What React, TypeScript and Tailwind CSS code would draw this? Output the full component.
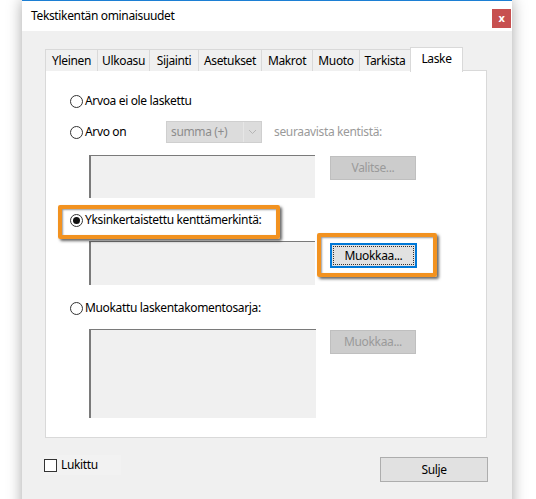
const tabs = [
  { name: "Yleinen", w: "w-[53px]" },
  { name: "Ulkoasu", w: "w-[53px]" },
  { name: "Sijainti", w: "w-[50px]" },
  { name: "Asetukset", w: "w-[64px]" },
  { name: "Makrot", w: "w-[52px]" },
  { name: "Muoto", w: "w-[48px]" },
  { name: "Tarkista", w: "w-[52px]" },
];

const Radio = ({ checked, label }: { checked?: boolean; label: string }) => (
  <div className="flex items-center gap-[2px] h-[20px]">
    <span className="w-[13px] h-[13px] rounded-full border border-[#333] bg-white flex items-center justify-center">
      {checked && <span className="w-[7px] h-[7px] rounded-full bg-[#111]" />}
    </span>
    <span>{label}</span>
  </div>
);

const DisabledButton = ({ label }: { label: string }) => (
  <div className="w-[86px] h-[24px] bg-[#cccccc] border border-[#bfbfbf] text-[#9a9a9a] flex items-center justify-center">
    {label}
  </div>
);

const Highlight = ({ className }: { className: string }) => (
  <div
    className={`absolute border-[4px] border-[#f29220] rounded-[2px] shadow-[2px_2px_3px_rgba(0,0,0,0.6),inset_1px_1px_2px_rgba(0,0,0,0.4)] ${className}`}
  />
);

export default function App() {
  return (
    <div className="w-[536px] h-[499px] bg-white overflow-hidden text-[12px] text-black font-['Noto_Sans',sans-serif] tracking-[-0.35px]">
      <div className="ml-[22px] w-[490px] h-[520px] bg-[#f0f0f0] border-t border-[#1c7fd4] shadow-[0_0_14px_rgba(0,0,0,0.35)]">
        {/* title bar */}
        <div className="h-[30px] bg-white flex items-center justify-between pl-[9px] pr-[1px]">
          <span>Tekstikentän ominaisuudet</span>
          <span className="w-[19px] h-[19px] mt-[4px] bg-[#c75050] text-white text-[11px] font-bold flex items-center justify-center leading-none pb-[2px]">
            x
          </span>
        </div>

        <div className="pl-[23px] pt-[16px]">
          {/* tabs */}
          <div className="flex items-end h-[24px] relative z-10">
            {tabs.map((t) => (
              <div
                key={t.name}
                className={`${t.w} h-[22px] border border-[#d9d9d9] border-b-0 -mr-px bg-[#f0f0f0] flex items-center justify-center`}
              >
                {t.name}
              </div>
            ))}
            <div className="w-[53px] h-[25px] -mb-px border border-[#d9d9d9] border-b-0 bg-white flex items-start justify-center pt-[2px]">
              Laske
            </div>
          </div>

          {/* panel */}
          <div className="w-[442px] h-[368px] -mt-px bg-white border border-[#d9d9d9] relative">
            <div className="pl-[24px] pt-[20px]">
              <Radio label="Arvoa ei ole laskettu" />
            </div>

            <div className="pl-[24px] mt-[10px] flex items-center h-[22px]">
              <div className="w-[96px]">
                <Radio label="Arvo on" />
              </div>
              <div className="w-[96px] h-[22px] bg-[#dcdcdc] border border-[#cfcfcf] flex items-center text-[#8c8c8c]">
                <span className="flex-1 pl-[4px]">summa (+)</span>
                <span className="w-[18px] h-full border-l border-[#e6e6e6] flex items-center justify-center">
                  <svg width="9" height="6" viewBox="0 0 9 6">
                    <path d="M1 1 L4.5 4.5 L8 1" fill="none" stroke="#b5b5b5" strokeWidth="1" />
                  </svg>
                </span>
              </div>
              <span className="ml-[12px] text-[#9a9a9a]">seuraavista kentistä:</span>
            </div>

            <div className="pl-[43px] mt-[12px] flex items-start">
              <div className="w-[226px] h-[43px] bg-[#f0f0f0] border-t border-l-2 border-[#7a7a7a]" />
              <div className="ml-[15px] mt-[1px]">
                <DisabledButton label="Valitse..." />
              </div>
            </div>

            <div className="pl-[24px] mt-[12px]">
              <Radio checked label="Yksinkertaistettu kenttämerkintä:" />
            </div>

            <div className="pl-[43px] mt-[11px] flex items-start">
              <div className="w-[226px] h-[44px] bg-[#f0f0f0] border-t border-l-2 border-[#7a7a7a]" />
              <div className="ml-[15px] mt-[2px] w-[87px] h-[25px] bg-[#e1e1e1] border-2 border-[#0078d7] p-[1px]">
                <div className="w-full h-full border border-dotted border-[#333] flex items-center justify-center">
                  Muokkaa...
                </div>
              </div>
            </div>

            <div className="pl-[24px] mt-[13px]">
              <Radio label="Muokattu laskentakomentosarja:" />
            </div>

            <div className="pl-[43px] mt-[11px] flex items-start">
              <div className="w-[227px] h-[89px] bg-[#f0f0f0] border-t border-l-2 border-[#7a7a7a]" />
              <div className="ml-[14px] mt-[1px]">
                <DisabledButton label="Muokkaa..." />
              </div>
            </div>

            <Highlight className="left-[12px] top-[134px] w-[222px] h-[34px]" />
            <Highlight className="left-[271px] top-[162px] w-[120px] h-[44px]" />
          </div>

          {/* footer */}
          <div className="w-[444px] mt-[19px] flex items-start justify-between -ml-px">
            <div className="flex items-center gap-[4px] -mt-[2px] h-[20px] pr-[23px] bg-[#f2f2f2]">
              <span className="w-[13px] h-[13px] border border-[#333] bg-white" />
              <span>Lukittu</span>
            </div>
            <div className="w-[108px] h-[25px] bg-[#e1e1e1] border border-[#adadad] flex items-center justify-center">
              Sulje
            </div>
          </div>
        </div>
      </div>
    </div>
  );
}
